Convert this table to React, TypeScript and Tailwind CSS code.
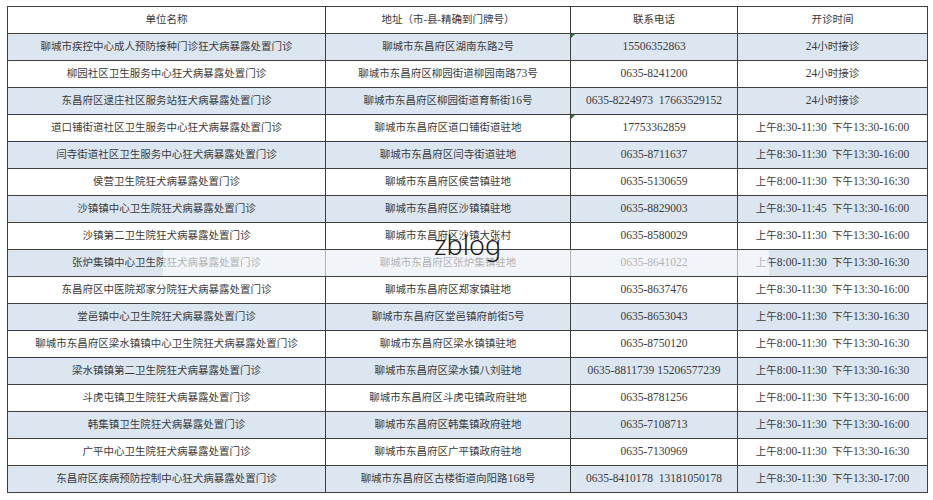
import React from 'react';

type Row = [string, string, string, string];

const rows: Row[] = [
  ['聊城市疾控中心成人预防接种门诊狂犬病暴露处置门诊', '聊城市东昌府区湖南东路2号', '15506352863', '24小时接诊'],
  ['柳园社区卫生服务中心狂犬病暴露处置门诊', '聊城市东昌府区柳园街道柳园南路73号', '0635-8241200', '24小时接诊'],
  ['东昌府区逯庄社区服务站狂犬病暴露处置门诊', '聊城市东昌府区柳园街道育新街16号', '0635-8224973  17663529152', '24小时接诊'],
  ['道口铺街道社区卫生服务中心狂犬病暴露处置门诊', '聊城市东昌府区道口铺街道驻地', '17753362859', '上午8:30-11:30  下午13:30-16:00'],
  ['闫寺街道社区卫生服务中心狂犬病暴露处置门诊', '聊城市东昌府区闫寺街道驻地', '0635-8711637', '上午8:30-11:30  下午13:30-16:00'],
  ['侯营卫生院狂犬病暴露处置门诊', '聊城市东昌府区侯营镇驻地', '0635-5130659', '上午8:00-11:30  下午13:30-16:30'],
  ['沙镇镇中心卫生院狂犬病暴露处置门诊', '聊城市东昌府区沙镇镇驻地', '0635-8829003', '上午8:30-11:45  下午13:30-16:00'],
  ['沙镇第二卫生院狂犬病暴露处置门诊', '聊城市东昌府区沙镇大张村', '0635-8580029', '上午8:30-11:30  下午13:30-16:00'],
  ['张炉集镇中心卫生院狂犬病暴露处置门诊', '聊城市东昌府区张炉集镇驻地', '0635-8641022', '上午8:00-11:30  下午13:30-16:30'],
  ['东昌府区中医院郑家分院狂犬病暴露处置门诊', '聊城市东昌府区郑家镇驻地', '0635-8637476', '上午8:30-11:30  下午13:30-16:00'],
  ['堂邑镇中心卫生院狂犬病暴露处置门诊', '聊城市东昌府区堂邑镇府前街5号', '0635-8653043', '上午8:00-11:30  下午13:30-16:30'],
  ['聊城市东昌府区梁水镇镇中心卫生院狂犬病暴露处置门诊', '聊城市东昌府区梁水镇镇驻地', '0635-8750120', '上午8:00-11:30  下午13:30-16:30'],
  ['梁水镇镇第二卫生院狂犬病暴露处置门诊', '聊城市东昌府区梁水镇八刘驻地', '0635-8811739 15206577239', '上午8:00-11:30  下午13:30-16:30'],
  ['斗虎屯镇卫生院狂犬病暴露处置门诊', '聊城市东昌府区斗虎屯镇政府驻地', '0635-8781256', '上午8:00-11:30  下午13:30-16:00'],
  ['韩集镇卫生院狂犬病暴露处置门诊', '聊城市东昌府区韩集镇政府驻地', '0635-7108713', '上午8:30-11:30  下午13:30-16:00'],
  ['广平中心卫生院狂犬病暴露处置门诊', '聊城市东昌府区广平镇政府驻地', '0635-7130969', '上午8:00-11:30  下午13:30-16:30'],
  ['东昌府区疾病预防控制中心狂犬病暴露处置门诊', '聊城市东昌府区古楼街道向阳路168号', '0635-8410178  13181050178', '上午8:30-11:30  下午13:30-17:00'],
];

// rows whose phone cell shows the little green "number as text" marker
const flagged = [0, 3];

const cell = 'border border-[#3f3f3f] p-0 text-center align-middle whitespace-pre';

// digits in the sheet render a touch larger than the CJK glyphs
const Mixed = ({ text }: { text: string }) => (
  <>
    {text.split(/([0-9:\-]+)/).map((part, i) =>
      /^[0-9:\-]+$/.test(part) ? (
        <span key={i} className="text-[11.5px]">
          {part}
        </span>
      ) : (
        part
      )
    )}
  </>
);

const App = () => {
  return (
    <div className="w-[933px] h-[500px] bg-white overflow-hidden">
      <div className="relative ml-[7px] pt-[6px] w-[920px]">
        <table
          className="table-fixed border-collapse w-[920px] text-[10.5px] text-[#3a3a3a]"
          style={{ fontFamily: '"Liberation Serif", "Noto Sans CJK SC", serif' }}
        >
          <colgroup>
            <col className="w-[318px]" />
            <col className="w-[245px]" />
            <col className="w-[167px]" />
            <col className="w-[190px]" />
          </colgroup>
          <thead>
            <tr className="h-[27px] bg-white">
              <th className={`${cell} font-normal`}>单位名称</th>
              <th className={`${cell} font-normal`}>地址（市-县-精确到门牌号）</th>
              <th className={`${cell} font-normal`}>联系电话</th>
              <th className={`${cell} font-normal`}>开诊时间</th>
            </tr>
          </thead>
          <tbody>
            {rows.map((r, i) => (
              <tr key={i} className={`h-[27px] ${i % 2 === 0 ? 'bg-[#dce6f1]' : 'bg-white'}`}>
                <td className={cell}>{r[0]}</td>
                <td className={cell}>
                  <Mixed text={r[1]} />
                </td>
                <td className={`${cell} relative text-[11.5px]`}>
                  {flagged.includes(i) && (
                    <span className="absolute left-0 top-0 w-0 h-0 border-t-[4px] border-r-[4px] border-t-[#1e7b34] border-r-transparent" />
                  )}
                  {r[2]}
                </td>
                <td className={cell}>
                  <Mixed text={r[3]} />
                </td>
              </tr>
            ))}
          </tbody>
        </table>

        {/* watermark band + text */}
        <div className="absolute left-[156px] top-[250px] w-[606px] h-[26px] bg-white/60" />
        <div
          className="absolute left-[427px] top-[231px] text-[27px] font-light leading-none text-[#1a1a1a]"
          style={{ fontFamily: '"Noto Sans", sans-serif' }}
        >
          zblog
        </div>
      </div>
    </div>
  );
};

export default App;
